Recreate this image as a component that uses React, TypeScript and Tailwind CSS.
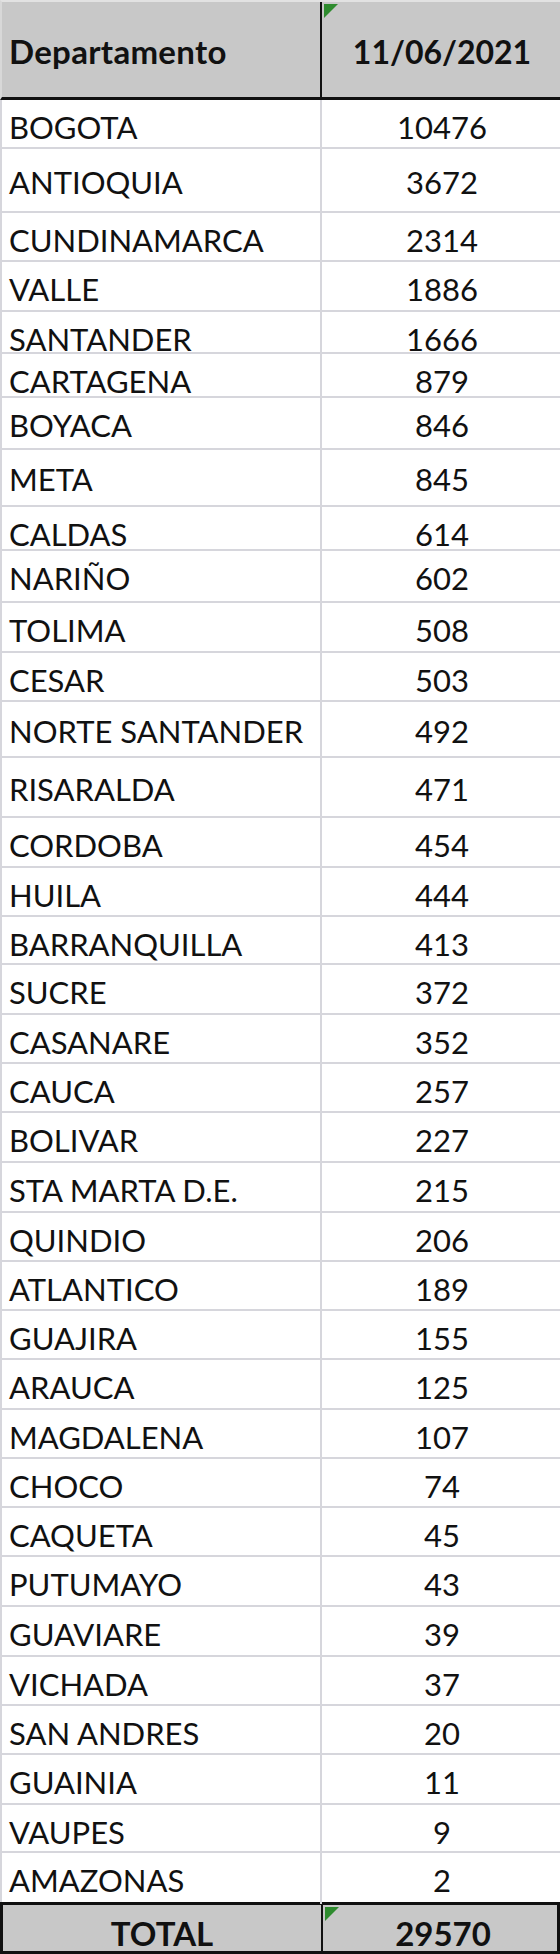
const rows = [
  { name: "BOGOTA", value: "10476", h: "h-[49px]" },
  { name: "ANTIOQUIA", value: "3672", h: "h-[64px]" },
  { name: "CUNDINAMARCA", value: "2314", h: "h-[49px]" },
  { name: "VALLE", value: "1886", h: "h-[50px]" },
  { name: "SANTANDER", value: "1666", h: "h-[42px]" },
  { name: "CARTAGENA", value: "879", h: "h-[44px]" },
  { name: "BOYACA", value: "846", h: "h-[52px]" },
  { name: "META", value: "845", h: "h-[57px]" },
  { name: "CALDAS", value: "614", h: "h-[44px]" },
  { name: "NARIÑO", value: "602", h: "h-[52px]" },
  { name: "TOLIMA", value: "508", h: "h-[50px]" },
  { name: "CESAR", value: "503", h: "h-[49px]" },
  { name: "NORTE SANTANDER", value: "492", h: "h-[56px]" },
  { name: "RISARALDA", value: "471", h: "h-[60px]" },
  { name: "CORDOBA", value: "454", h: "h-[50px]" },
  { name: "HUILA", value: "444", h: "h-[49px]" },
  { name: "BARRANQUILLA", value: "413", h: "h-[48px]" },
  { name: "SUCRE", value: "372", h: "h-[50px]" },
  { name: "CASANARE", value: "352", h: "h-[49px]" },
  { name: "CAUCA", value: "257", h: "h-[49px]" },
  { name: "BOLIVAR", value: "227", h: "h-[50px]" },
  { name: "STA MARTA D.E.", value: "215", h: "h-[50px]" },
  { name: "QUINDIO", value: "206", h: "h-[49px]" },
  { name: "ATLANTICO", value: "189", h: "h-[49px]" },
  { name: "GUAJIRA", value: "155", h: "h-[49px]" },
  { name: "ARAUCA", value: "125", h: "h-[50px]" },
  { name: "MAGDALENA", value: "107", h: "h-[49px]" },
  { name: "CHOCO", value: "74", h: "h-[49px]" },
  { name: "CAQUETA", value: "45", h: "h-[49px]" },
  { name: "PUTUMAYO", value: "43", h: "h-[50px]" },
  { name: "GUAVIARE", value: "39", h: "h-[50px]" },
  { name: "VICHADA", value: "37", h: "h-[49px]" },
  { name: "SAN ANDRES", value: "20", h: "h-[49px]" },
  { name: "GUAINIA", value: "11", h: "h-[50px]" },
  { name: "VAUPES", value: "9", h: "h-[48px]" },
  { name: "AMAZONAS", value: "2", h: "h-[49px]" },
];

function Flag() {
  // excel green "number stored as text" marker
  return (
    <svg className="absolute left-[2px] top-[2px]" width="14" height="14" viewBox="0 0 14 14">
      <polygon points="0,0 14,0 0,14" fill="#2e8b2e" />
    </svg>
  );
}

export default function App() {
  return (
    <div className="w-[560px] bg-white text-[#111] font-['Lato',sans-serif] text-[31px]">
      <div className="grid grid-cols-[320px_240px] h-[100px] bg-[#c8c8c8] border-t-2 border-t-[#e2e2e2] border-b-[3px] border-b-[#111] border-l-2 border-l-[#d8d8d8] font-bold">
        <div className="flex items-center pl-[7px] pt-1 text-[33px] tracking-[0.3px] border-r-2 border-r-[#111]">
          Departamento
        </div>
        <div className="relative flex items-center justify-center pt-1 text-[32px]">
          <Flag />
          11/06/2021
        </div>
      </div>

      {rows.map((r, i) => (
        <div
          key={r.name}
          className={
            "grid grid-cols-[320px_240px] border-l-2 border-l-[#d6d6dc] " +
            r.h +
            (i < rows.length - 1 ? " border-b-2 border-b-[#d6d6dc]" : "")
          }
        >
          <div className="flex items-center pl-[7px] pt-1 border-r-2 border-r-[#d6d6dc] whitespace-nowrap">
            {r.name}
          </div>
          <div className="flex items-center justify-center pt-1">{r.value}</div>
        </div>
      ))}

      <div className="grid grid-cols-[320px_240px] h-[52px] bg-[#c8c8c8] border-[3px] border-[#111] font-bold text-[33px]">
        <div className="flex items-center justify-center pt-1 border-r-2 border-r-[#111]">TOTAL</div>
        <div className="relative flex items-center justify-center pt-1">
          <Flag />
          29570
        </div>
      </div>
    </div>
  );
}
